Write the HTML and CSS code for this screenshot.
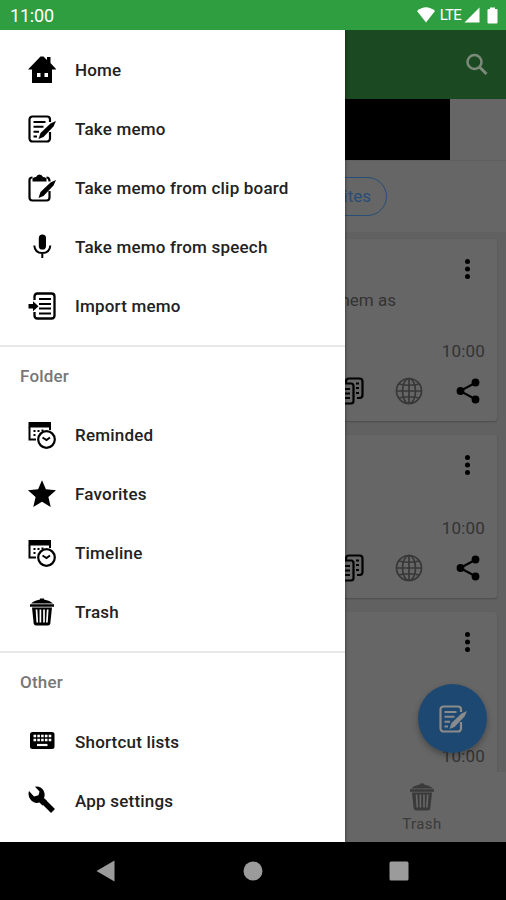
FILE: index.html
```html
<!DOCTYPE html>
<html lang="en">
<head>
    <meta charset="UTF-8">
    <meta name="viewport" content="width=device-width, initial-scale=1.0">
    <title>Memo</title>
    <link rel="stylesheet" href="styles.css">
</head>
<body>
    <!-- shared icons -->
    <svg class="defs" width="0" height="0">
        <symbol id="memo" viewBox="0 0 28 28">
            <path d="M22 7V4.500A3 3 0 0 0 19 1.500H4.500A3 3 0 0 0 1.500 4.500V23.500a3 3 0 0 0 3 3H19a3 3 0 0 0 3-3V17" fill="none" stroke="currentColor" stroke-width="2.200"/>
            <path d="M5.500 7H17.500M5.500 11.800H15.500M5.500 16.700H11M5.500 21.500H9" fill="none" stroke="currentColor" stroke-width="2"/>
            <path d="M10.500 24l2-6L22.500 8.500l5.500-2.500-2.500 5.500L15.500 22z" fill="currentColor"/>
        </symbol>
        <symbol id="calendar" viewBox="0 0 28 28">
            <path d="M.5 1H23V6.500H.5z" fill="currentColor"/>
            <path d="M1.500 6V18.500H8M22 6V9" fill="none" stroke="currentColor" stroke-width="2"/>
            <path d="M5.500 10h2M9.500 10h2M13.500 9.500h2M5.500 14h2" stroke="currentColor" stroke-width="1.800"/>
            <circle cx="18.500" cy="18.500" r="8.300" fill="none" stroke="currentColor" stroke-width="2.200"/>
            <path d="M14.500 16.500l4 2.500 3.500-2.500" fill="none" stroke="currentColor" stroke-width="2"/>
        </symbol>
        <symbol id="trash" viewBox="0 0 28 28">
            <path d="M3 5.500Q6 2.500 12 1.500V.5h4v1Q22 2.500 25 5.500z" fill="currentColor"/>
            <path d="M2 7.500H26" stroke="currentColor" stroke-width="2.500"/>
            <path d="M4 9.500H24L22.300 25.500Q22 27.500 20 27.500H8Q6 27.500 5.700 25.500z" fill="currentColor"/>
            <path class="slots" d="M8.500 11.500l.8 13M12.400 11.500v13M16 11.500v13M19.700 11.500l-.8 13"/>
        </symbol>
        <symbol id="copy" viewBox="0 0 28 28">
            <path d="M10 6V4.500Q10 1.500 13 1.500H23.500Q26.500 1.500 26.500 4.500V18Q26.500 21 23.500 21H21" fill="none" stroke="currentColor" stroke-width="2.200"/>
            <rect x="1.500" y="6.500" width="16" height="20" rx="2.500" fill="none" stroke="currentColor" stroke-width="2.200"/>
            <path d="M5 12h9M5 16.500h9M5 21h9M20 6.500h3M20 11h3M20 16h3" stroke="currentColor" stroke-width="1.900"/>
        </symbol>
        <symbol id="globe" viewBox="0 0 28 28">
            <g fill="none" stroke="currentColor" stroke-width="1.700">
                <circle cx="14" cy="14" r="12.500"/>
                <ellipse cx="14" cy="14" rx="6.500" ry="12.500"/>
                <path d="M1.500 14h25M14 1.500v25M4 7Q14 9.500 24 7M4 21Q14 18.500 24 21"/>
            </g>
        </symbol>
        <symbol id="share" viewBox="0 0 28 28">
            <path d="M22 5.500L6 14l16 8.500" fill="none" stroke="currentColor" stroke-width="2"/>
            <circle cx="21.500" cy="5.500" r="3.900" fill="currentColor"/>
            <circle cx="6.500" cy="14" r="3.900" fill="currentColor"/>
            <circle cx="21.500" cy="22.500" r="3.900" fill="currentColor"/>
        </symbol>
        <symbol id="dots" viewBox="0 0 28 28">
            <g fill="currentColor">
                <circle cx="14.500" cy="6.500" r="2.500"/>
                <circle cx="14.500" cy="14" r="2.500"/>
                <circle cx="14.500" cy="21.500" r="2.500"/>
            </g>
        </symbol>
    </svg>

    <div class="status-bar">
        <span class="clock">11:00</span>
        <svg class="wifi" width="20" height="16" viewBox="0 0 20 16"><path d="M1 4Q10-3.500 19 4L10 15.500z" fill="#fff"/></svg>
        <span class="lte">LTE</span>
        <svg class="signal" width="16" height="16" viewBox="0 0 16 16"><path d="M15.500 .5V15.500H.5z" fill="#fff"/></svg>
        <svg class="battery" width="11" height="17" viewBox="0 0 11 17"><path d="M3 2V.5H8V2H9.500Q10.500 2 10.500 3V15.500Q10.500 16.500 9.500 16.500H1.500Q.5 16.500 .5 15.500V3Q.5 2 1.500 2z" fill="#fff"/></svg>
    </div>

    <div class="screen">
        <div class="app">
            <div class="app-bar">
                <svg width="24" height="24" viewBox="0 0 24 24" fill="none" stroke="currentColor"><circle cx="9.500" cy="9" r="7" stroke-width="2.500"/><path d="M14.500 14l7 7" stroke-width="3"/></svg>
            </div>
            <div class="banner"><div class="banner-ad"></div></div>
            <div class="chips"><span class="chip">Favorites</span></div>

            <div class="list">
                <div class="card card-tall">
                    <svg class="icon more"><use href="#dots"/></svg>
                    <p class="card-text">them as</p>
                    <span class="time">10:00</span>
                    <div class="actions">
                        <svg class="icon"><use href="#copy"/></svg>
                        <svg class="icon globe"><use href="#globe"/></svg>
                        <svg class="icon"><use href="#share"/></svg>
                    </div>
                </div>
                <div class="card">
                    <svg class="icon more"><use href="#dots"/></svg>
                    <span class="time">10:00</span>
                    <div class="actions">
                        <svg class="icon"><use href="#copy"/></svg>
                        <svg class="icon globe"><use href="#globe"/></svg>
                        <svg class="icon"><use href="#share"/></svg>
                    </div>
                </div>
                <div class="card card-last">
                    <svg class="icon more"><use href="#dots"/></svg>
                    <span class="time">10:00</span>
                </div>
            </div>

            <div class="tabs">
                <div class="tab">
                    <svg class="icon"><use href="#trash"/></svg>
                    <span>Trash</span>
                </div>
            </div>
            <button class="fab"><svg class="icon"><use href="#memo"/></svg></button>
        </div>

        <nav class="drawer">
            <ul class="menu">
                <li><svg class="icon" viewBox="0 0 28 28"><path d="M0 13.500L12.500 .5h3L19 4V1h3.500V7L28.500 13.500H24V27H4V13.500z" fill="#000"/><path d="M9 17h3.500v4H9zM16.500 17H20v4h-3.500z" fill="#fff"/></svg>Home</li>
                <li><svg class="icon"><use href="#memo"/></svg>Take memo</li>
                <li><svg class="icon" viewBox="0 0 28 28"><path d="M4.500 3.500Q1.500 3.500 1.500 6V23.500Q1.500 26.500 4.500 26.500H18.500Q21.500 26.500 21.500 23.500V17M18.500 3.500Q21.500 3.500 21.500 7.500" fill="none" stroke="#000" stroke-width="2.200"/><path d="M4.500 7.500V5Q4.500 3.500 8 3 9 .5 11.500 .5T15 3Q18.500 3.500 18.500 5V7.500z" fill="#000"/><path d="M10.500 24l2-6L22.500 8.500l5.500-2.500-2.500 5.500L15.500 22z" fill="#000"/></svg>Take memo from clip board</li>
                <li><svg class="icon" viewBox="0 0 28 28"><rect x="10.800" y="1.500" width="7.200" height="15" rx="3.600"/><path d="M6.300 12.500q.5 7.500 8 7.500t8-7.500M14.300 20v5" fill="none" stroke="#000" stroke-width="2"/></svg>Take memo from speech</li>
                <li><svg class="icon" viewBox="0 0 28 28"><path d="M6.500 8V4.500Q6.500 1.500 9.500 1.500H23.500Q26.500 1.500 26.500 4.500V23.500Q26.500 26.500 23.500 26.500H9.500Q6.500 26.500 6.500 23.500V20" fill="none" stroke="#000" stroke-width="2.300"/><path d="M11 7H23M11 12H23M11 16.500H23M11 21.500H23" stroke="#000" stroke-width="2"/><path d="M.5 12H5V9.200l5.500 5L5 19.200V16.400H.5z"/></svg>Import memo</li>
            </ul>
            <h2>Folder</h2>
            <ul class="menu">
                <li><svg class="icon"><use href="#calendar"/></svg>Reminded</li>
                <li><svg class="icon" viewBox="0 0 28 28"><path d="M14 .3l3.900 9 10.100.9-7.600 6.700 2.300 10L14 21.700l-8.700 5.200 2.300-10L0 10.200l10.100-.9z"/></svg>Favorites</li>
                <li><svg class="icon"><use href="#calendar"/></svg>Timeline</li>
                <li><svg class="icon"><use href="#trash"/></svg>Trash</li>
            </ul>
            <h2>Other</h2>
            <ul class="menu">
                <li><svg class="icon" viewBox="0 0 28 28"><rect x="2" y="5" width="24.500" height="17" rx="2.500"/><path d="M5.500 9h18M5.500 13h18" stroke="#fff" stroke-width="2.600" stroke-dasharray="2.600 1.200"/><path d="M9 18h10.500" stroke="#fff" stroke-width="2.200"/></svg>Shortcut lists</li>
                <li><svg class="icon" viewBox="0 0 28 28"><path d="M15.500 15.500L25 25" stroke="#000" stroke-width="5.500"/><path d="M7 .8Q12.500-.2 15.500 4.500 17.500 8.500 16 12L19 15l-4.500 4.500L11.500 16.500Q6 18 2.500 13.500-.5 9.500 1 5L6 10.500l4.500-1.200L11.500 5.500z" fill="#000"/></svg>App settings</li>
            </ul>
        </nav>
    </div>

    <div class="nav-bar">
        <svg width="20" height="22" viewBox="0 0 20 22"><path d="M.5 11L18.500 .5V21.500z" fill="#9b9b9b"/></svg>
        <svg width="20" height="20" viewBox="0 0 20 20"><circle cx="10" cy="10" r="9.500" fill="#9b9b9b"/></svg>
        <svg width="20" height="20" viewBox="0 0 20 20"><rect x=".5" y=".5" width="19" height="19" rx="1.500" fill="#9b9b9b"/></svg>
    </div>
</body>
</html>
```
FILE: styles.css
```css
* {
    box-sizing: border-box;
}

body {
    margin: 0;
    width: 506px;
    height: 900px;
    display: flex;
    flex-direction: column;
    overflow: hidden;
    background-color: #000;
    font-family: Roboto, sans-serif;
    font-size: 17px;
}

.defs {
    position: absolute;
}

.icon {
    width: 28px;
    height: 28px;
    flex: none;
}

.slots {
    fill: none;
    stroke: var(--slot, #fff);
    stroke-width: 1.7;
}

/* status bar */
.status-bar {
    height: 30px;
    flex: none;
    display: flex;
    align-items: center;
    padding: 0 8px 0 10px;
    background-color: #2f9e41;
    color: #fff;
}

.clock {
    margin-right: auto;
    font-size: 18px;
    letter-spacing: -0.2px;
    padding-top: 1px;
}

.lte {
    margin: 0 3px 0 4px;
    font-size: 15px;
    letter-spacing: -0.8px;
}

.battery {
    margin-left: 7px;
}

/* main screen, dimmed behind the drawer */
.screen {
    position: relative;
    height: 812px;
    flex: none;
}

.app {
    height: 100%;
    display: flex;
    flex-direction: column;
    background-color: #666;
    color: #333;
}

.app-bar {
    height: 69px;
    flex: none;
    display: flex;
    justify-content: flex-end;
    align-items: center;
    padding-right: 17px;
    background-color: #1b4921;
    color: #7b8a7a;
}

.banner {
    height: 62px;
    flex: none;
    border-bottom: 1px solid #606060;
}

.banner-ad {
    width: 450px;
    height: 61px;
    background-color: #000;
}

.chips {
    height: 71px;
    flex: none;
    padding: 16px 119px 0 0;
    text-align: right;
}

.chip {
    display: inline-block;
    height: 39px;
    padding: 0 15px;
    border: 1px solid #284d77;
    border-radius: 20px;
    line-height: 36px;
    font-size: 17px;
    color: #284d77;
}

.list {
    flex: 1;
    overflow: hidden;
    display: flex;
    flex-direction: column;
    gap: 14px;
    padding: 7px 9px 0;
    background-color: #616161;
}

.card {
    height: 163px;
    flex: none;
    display: flex;
    flex-direction: column;
    align-items: flex-end;
    padding: 16px 12px 16px 0;
    background-color: #666;
    border-radius: 3px;
    box-shadow: 0 1px 2px #4c4c4c;
}

.card-tall {
    height: 182px;
}

.more {
    margin-right: 4px;
    color: #000;
}

.card-text {
    margin: 7px 89px 0 0;
    line-height: 20px;
}

.time {
    margin-top: auto;
    line-height: 20px;
    letter-spacing: 0.2px;
}

.actions {
    display: flex;
    gap: 31px;
    margin: 16px 3px 0 0;
    color: #000;
}

.globe {
    color: #383838;
}

.card-last .time {
    margin: 90px 0 0;
}

.tabs {
    height: 70px;
    flex: none;
    display: flex;
    justify-content: flex-end;
    background-color: #666;
}

.tab {
    --slot: #666;
    width: 168px;
    display: flex;
    flex-direction: column;
    align-items: center;
    padding-top: 11px;
    font-size: 15px;
    line-height: 26px;
    letter-spacing: 0.4px;
    color: #3a3a3a;
}

.fab {
    position: absolute;
    right: 19px;
    bottom: 89px;
    width: 69px;
    height: 69px;
    display: flex;
    justify-content: center;
    align-items: center;
    padding: 0;
    border: none;
    border-radius: 50%;
    background-color: #1d4872;
    color: #8b8b8b;
    box-shadow: 0 3px 6px rgba(0, 0, 0, 0.3);
}

/* drawer */
.drawer {
    position: absolute;
    top: 0;
    left: 0;
    width: 345px;
    height: 100%;
    background-color: #fff;
    box-shadow: 0 0 3px rgba(0, 0, 0, 0.6);
    clip-path: inset(0 -6px 0 0);
}

.menu {
    margin: 0;
    padding: 0;
    list-style: none;
}

.menu:first-child {
    padding-top: 10px;
}

.menu li {
    height: 59px;
    display: flex;
    align-items: center;
    gap: 19px;
    padding: 1px 0 0 28px;
    font-weight: 500;
    letter-spacing: 0.2px;
    color: #222;
}

.menu .icon {
    margin-top: -1px;
    color: #000;
}

.drawer h2 {
    height: 60.4px;
    margin: 10px 0 0;
    padding-left: 20px;
    border-top: 2px solid #e8e8e8;
    line-height: 59px;
    font-size: 17px;
    font-weight: 500;
    letter-spacing: 0.2px;
    color: #777;
}

/* system navigation */
.nav-bar {
    flex: 1;
    display: flex;
    justify-content: space-between;
    align-items: center;
    padding: 0 97px 0 96px;
}
```
